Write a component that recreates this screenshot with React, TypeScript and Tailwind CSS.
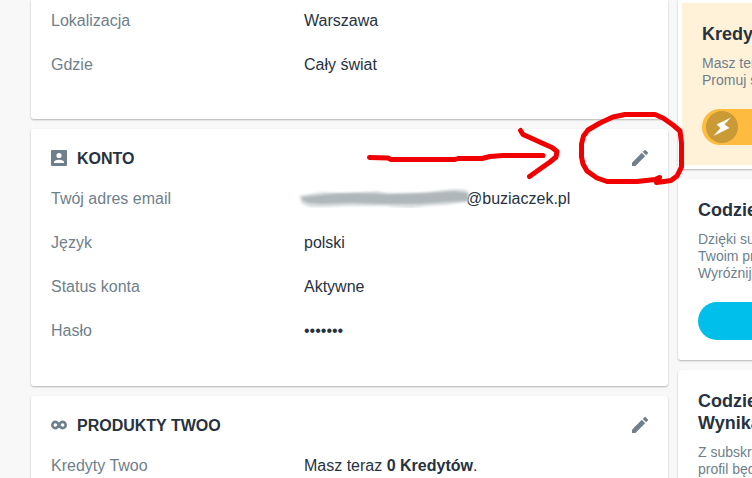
import React from 'react';

interface CardProps {
  children: React.ReactNode;
  className?: string;
}

const Card: React.FC<CardProps> = ({ children, className = 'rounded-[3px]' }) => (
  <section className={`bg-white shadow-[0_1px_2px_rgba(0,0,0,0.28)] ${className}`}>{children}</section>
);

const EditIcon: React.FC = () => (
  <svg className="w-4 h-4" viewBox="3 3 18 18" fill="currentColor" aria-hidden="true">
    <path d="M3 17.25V21h3.75L17.81 9.94l-3.75-3.75L3 17.25zM20.71 7.04a1 1 0 0 0 0-1.41l-2.34-2.34a1 1 0 0 0-1.41 0l-1.83 1.83 3.75 3.75 1.83-1.83z" />
  </svg>
);

const AccountIcon: React.FC = () => (
  <svg className="w-4 h-4" viewBox="0 0 16 16" aria-hidden="true">
    <rect width="16" height="16" rx="1" fill="currentColor" />
    <circle cx="8" cy="5.5" r="2.6" fill="white" />
    <path d="M3 13v-.9C3 10.5 6.3 9.7 8 9.7s5 .8 5 2.4v.9z" fill="white" />
  </svg>
);

const CreditsIcon: React.FC = () => (
  <svg className="w-4 h-4" viewBox="0 0 16 16" fill="none" stroke="currentColor" strokeWidth="2.6" aria-hidden="true">
    <path d="M8 8C6.9 6 6 4.900 4.400 4.900a3.100 3.100 0 0 0 0 6.200C6 11.100 6.900 10 8 8s2-3.100 3.600-3.100a3.100 3.100 0 0 1 0 6.200C10 11.100 9.100 10 8 8z" />
  </svg>
);

interface SectionHeaderProps {
  icon: React.ReactNode;
  title: string;
}

const SectionHeader: React.FC<SectionHeaderProps> = ({ icon, title }) => (
  <header className="flex items-center h-5 mb-[21px] text-[#6f7f8b]">
    {icon}
    <h2 className="ml-[10px] flex-1 pt-0.5 text-base leading-5 font-bold text-[#27323f]">{title}</h2>
    <button type="button" aria-label={`Edytuj: ${title}`} className="cursor-pointer">
      <EditIcon />
    </button>
  </header>
);

interface RowProps {
  label: string;
  children: React.ReactNode;
}

const Row: React.FC<RowProps> = ({ label, children }) => (
  <div className="flex leading-5">
    <dt className="w-[253px] shrink-0 text-[#6f7f8b]">{label}</dt>
    <dd className="flex-1 text-[#27323f]">{children}</dd>
  </div>
);

// Smudge that hides the first part of the address
const Smudge: React.FC = () => (
  <span className="relative inline-block w-[162px] h-3">
    <svg
      className="absolute -left-2 -top-1 w-[176px] h-5"
      viewBox="0 0 176 20"
      aria-hidden="true"
    >
      <defs>
        <filter id="smudge" x="-5%" y="-30%" width="110%" height="160%">
          <feGaussianBlur stdDeviation="1" />
        </filter>
      </defs>
      <g filter="url(#smudge)">
        <path
          d="M3 8l10-2 14-2 16 1 22-1 16-1 10 2 20 0 22-1 14-2 14-1 10 1 2 3-1 9-8 1-14 2-20 1-14 2-18-1-8-1-36 0-24 1-16 0-8-3z"
          fill="#d9dddf"
        />
        <path
          d="M6 9l18-2 18-2 26 0 24 1 34-1 18-1 14-1 14 2 0 8-20 1-28 2-36 0-34-1-28 1-14-1-6-3z"
          fill="#b0b7ba"
        />
      </g>
    </svg>
  </span>
);

interface PromoProps {
  title: string[];
  text: string[];
}

const PromoText: React.FC<PromoProps> = ({ title, text }) => (
  <>
    <h3 className="text-lg leading-[22px] font-bold text-[#27323f]">
      {title.map(line => (
        <span key={line} className="block">
          {line}
        </span>
      ))}
    </h3>
    <p className="mt-[10px] text-sm leading-[17px] text-[#6f7f8b]">
      {text.map(line => (
        <span key={line} className="block">
          {line}
        </span>
      ))}
    </p>
  </>
);

// Hand-drawn arrow and circle pointing at the edit button
const Marker: React.FC = () => (
  <svg
    className="absolute left-0 top-0 w-[752px] h-[200px] pointer-events-none"
    viewBox="0 0 752 200"
    fill="none"
    stroke="#f00000"
    strokeWidth="5"
    strokeLinecap="round"
    strokeLinejoin="round"
    aria-hidden="true"
  >
    <path d="M369.500 157.500L388 158L391 159.500H455L458 158.500H482L490 156.500L503 155.500H543" />
    <path d="M520.500 130.500L523 134.500L532 138.500L543 143.500L552 147.500L557 151.500L556 157L550 162L540 169L529.500 176.500" />
    <path d="M655 179.500L637 181.500H607L597 178L587 171L583 164L581.500 157V144L583.500 136L588 130L600 123L613 117L625 114.500H655L663 118L673 125L680 131L681.500 143V167L677 176L671 180.500L664 181.500L656.500 182.500L659.500 177.500L655 179.500" />
  </svg>
);

export default function App() {
  return (
    <div className="relative w-full h-screen overflow-hidden bg-[#f8f8f8] font-['Liberation_Sans',Arial,sans-serif] text-base">
      <div className="flex gap-[10px] pl-[31px]">
        <main className="flex-1 min-w-0 flex flex-col gap-[10px]">
          <Card className="rounded-b-[3px]">
            <dl className="flex flex-col gap-6 px-5 pt-[11px] pb-11">
              <Row label="Lokalizacja">Warszawa</Row>
              <Row label="Gdzie">Cały świat</Row>
            </dl>
          </Card>

          <Card>
            <div className="px-5 pt-[19px] pb-[45px]">
              <SectionHeader icon={<AccountIcon />} title="KONTO" />
              <dl className="flex flex-col gap-6">
                <Row label="Twój adres email">
                  <Smudge />
                  @buziaczek.pl
                </Row>
                <Row label="Język">polski</Row>
                <Row label="Status konta">Aktywne</Row>
                <Row label="Hasło">•••••••</Row>
              </dl>
            </div>
          </Card>

          <Card>
            <div className="px-5 pt-[19px] pb-[45px]">
              <SectionHeader icon={<CreditsIcon />} title="PRODUKTY TWOO" />
              <dl>
                <Row label="Kredyty Twoo">
                  Masz teraz <b>0 Kredytów</b>.
                </Row>
              </dl>
            </div>
          </Card>
        </main>

        <aside className="w-[74px] shrink-0 flex flex-col gap-[10px] whitespace-nowrap">
          <Card className="w-[300px] rounded-b-[3px] px-1 pb-1 pt-[3px]">
            <div className="bg-[#fff2d9] p-5">
              <PromoText title={['Kredyty']} text={['Masz teraz', 'Promuj się']} />
              <button
                type="button"
                aria-label="Promuj"
                className="mt-5 flex items-center w-full h-9 rounded-full bg-[#fdbb3f] px-1 cursor-pointer"
              >
                <span className="flex items-center justify-center w-8 h-8 rounded-full bg-[#c99a35]">
                  <svg className="w-5 h-5" viewBox="0 0 20 20" fill="white" aria-hidden="true">
                    <path d="M19 .5L4.500 7.500l4 3.500L1.500 19l16-8-5-3.500z" />
                  </svg>
                </span>
              </button>
            </div>
          </Card>

          <Card className="w-[300px] rounded-[3px]">
            <div className="p-5">
              <PromoText
                title={['Codziennie']}
                text={['Dzięki subskrypcji', 'Twoim profilem', 'Wyróżnij się']}
              />
              <button
                type="button"
                aria-label="Wyróżnij"
                className="block mt-5 w-full h-[38px] rounded-full bg-[#00bfea] cursor-pointer"
              />
            </div>
          </Card>

          <Card className="w-[300px] rounded-[3px]">
            <div className="p-5">
              <PromoText title={['Codziennie', 'Wynikach']} text={['Z subskrypcją', 'profil będzie']} />
            </div>
          </Card>
        </aside>
      </div>
      <Marker />
    </div>
  );
}
